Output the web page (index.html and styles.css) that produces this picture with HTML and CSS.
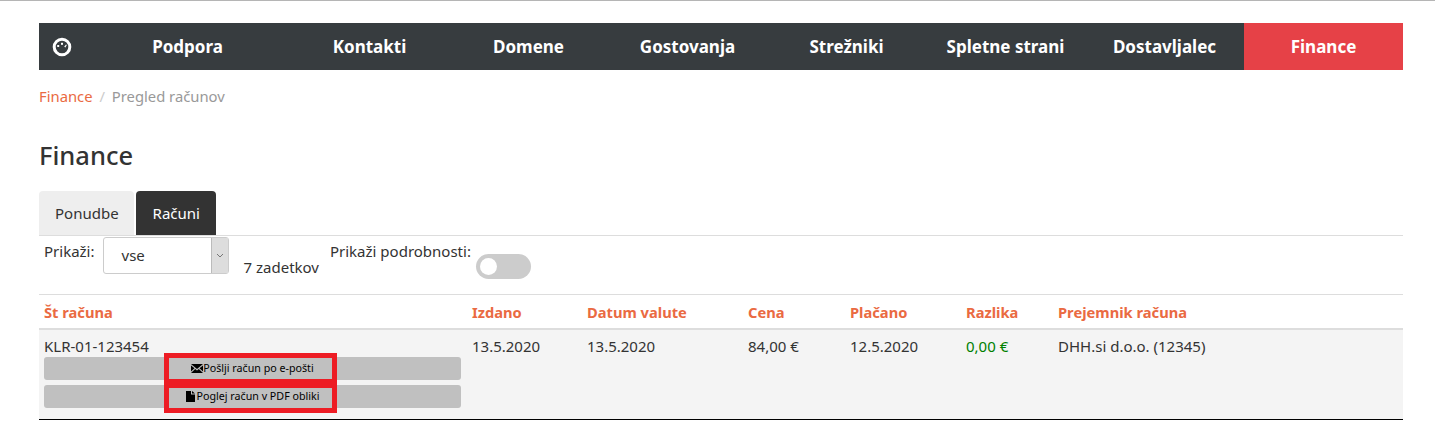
FILE: index.html
```html
<!DOCTYPE html>
<html>
<head>
  <title>Finance</title>
  <meta charset="utf-8">
  <link rel="stylesheet" href="styles.css">
</head>
<body>
<div class="page">
  <nav class="mainnav">
    <a class="navicon" href="#">
      <svg width="20" height="20" viewBox="0 0 20 20">
        <circle cx="10" cy="10" r="7.8" fill="none" stroke="#fff" stroke-width="3"/>
        <rect x="5.200" y="8" width="2" height="2" fill="#fff"/>
        <rect x="9" y="5.800" width="2" height="2" fill="#fff"/>
        <path d="M12.200 9.800l1.800-2.400 0.800 0.600-1.400 2.400z" fill="#fff"/>
      </svg>
    </a>
    <a href="#">Podpora</a>
    <a href="#">Kontakti</a>
    <a href="#">Domene</a>
    <a href="#">Gostovanja</a>
    <a href="#">Strežniki</a>
    <a href="#">Spletne strani</a>
    <a href="#">Dostavljalec</a>
    <a class="active" href="#">Finance</a>
  </nav>

  <div class="crumbs">
    <a href="#">Finance</a>
    <span class="sep">/</span>
    <span class="current">Pregled računov</span>
  </div>

  <h2 class="title">Finance</h2>

  <ul class="tabs">
    <li>Ponudbe</li>
    <li class="on">Računi</li>
  </ul>

  <div class="filters">
    <span class="lbl">Prikaži:</span>
    <div class="select">
      <span class="select-val">vse</span>
      <span class="select-btn">
        <svg width="8" height="5" viewBox="0 0 8 5"><path d="M1 1l3 3 3-3" fill="none" stroke="#777" stroke-width="1"/></svg>
      </span>
    </div>
    <span class="count">7 zadetkov</span>
    <span class="lbl details">Prikaži podrobnosti:</span>
    <span class="toggle"><i></i></span>
  </div>

  <table class="invoices">
    <thead>
      <tr>
        <th class="c-no">Št računa</th>
        <th class="c-date">Izdano</th>
        <th class="c-due">Datum valute</th>
        <th class="c-price">Cena</th>
        <th class="c-paid">Plačano</th>
        <th class="c-diff">Razlika</th>
        <th>Prejemnik računa</th>
      </tr>
    </thead>
    <tbody>
      <tr>
        <td class="first-cell">
          KLR-01-123454
          <a class="btn first" href="#">
            <svg width="12" height="9" viewBox="0 0 12 9"><path d="M0 0h12L6 5zM0 1.500v6l3.500-3.200zM12 1.500v6L8.500 4.300zM0 9h12L7.800 5 6 6.500 4.200 5z"/></svg>Pošlji račun po e-pošti
          </a>
          <a class="btn" href="#">
            <svg class="doc" width="9" height="11" viewBox="0 0 9 11"><path d="M0 0h5v3.500h4V11H0zM6 0l3 2.600H6z"/></svg>Poglej račun v PDF obliki
          </a>
        </td>
        <td>13.5.2020</td>
        <td>13.5.2020</td>
        <td>84,00 €</td>
        <td>12.5.2020</td>
        <td class="zero">0,00 €</td>
        <td>DHH.si d.o.o. (12345)</td>
      </tr>
    </tbody>
  </table>
</div>

<!-- red marks on top of the buttons -->
<div class="mark mark1"></div>
<div class="mark mark2"></div>
</body>
</html>
```

FILE: styles.css
```css
html, body {
  margin: 0;
  padding: 0;
}
body {
  height: 424px;
  overflow: hidden;
  position: relative;
  border-top: 1px solid #b5b5b5;
  box-sizing: border-box;
  background: #fff;
  color: #333;
  font-family: "Noto Sans", "Open Sans", sans-serif;
  font-size: 15px;
}
a {
  text-decoration: none;
  color: inherit;
}
.page {
  margin: 0 32px 0 39px;
  padding-top: 22px;
}
.mainnav {
  display: grid;
  grid-template-columns: 46px 205px repeat(7, 159px);
  height: 47px;
  background: #373c3f;
  color: #fff;
  font-size: 17px;
  font-weight: 700;
}
.mainnav a {
  display: flex;
  align-items: center;
  justify-content: center;
}
.mainnav .active {
  background: #e64147;
}
.crumbs {
  margin-top: 17px;
  height: 18px;
  line-height: 18px;
  color: #999;
  font-size: 14.800px;
}
.crumbs a {
  color: #ea6a42;
}
.crumbs .sep {
  color: #ccc;
  margin: 0 3px;
}
.title {
  margin: 32px 0 0;
  height: 36px;
  line-height: 36px;
  font-size: 25.500px;
  font-weight: 500;
  color: #333;
}
.tabs {
  display: flex;
  gap: 2px;
  list-style: none;
  margin: 18px 0 0;
  padding: 0;
  height: 44px;
  border-bottom: 1px solid #ddd;
}
.tabs li {
  padding: 0 15px 0 16px;
  line-height: 44px;
  border-radius: 4px 4px 0 0;
  background: #eee;
  color: #333;
}
.tabs li.on {
  padding: 0 16px 0 17px;
  background: #333;
  color: #fff;
}
.filters {
  display: flex;
  align-items: flex-start;
  height: 58px;
  padding-left: 5px;
  border-bottom: 1px solid #ddd;
}
.filters .lbl {
  margin-top: 5px;
}
.select {
  display: flex;
  box-sizing: border-box;
  width: 126px;
  height: 37px;
  margin: 1px 0 0 8px;
  border: 1px solid #ccc;
  border-radius: 3px;
}
.select-val {
  flex: 1;
  padding-left: 18px;
  line-height: 35px;
}
.select-btn {
  display: flex;
  align-items: center;
  justify-content: center;
  width: 16px;
  background: #ddd;
  border-left: 1px solid #bbb;
}
.count {
  margin: 21px 0 0 15px;
}
.details {
  margin-left: 11px;
}
.toggle {
  position: relative;
  display: block;
  width: 55px;
  height: 25px;
  margin: 18px 0 0 5px;
  border-radius: 13px;
  background: #ccc;
}
.toggle i {
  position: absolute;
  top: 4px;
  left: 4px;
  width: 17px;
  height: 17px;
  border-radius: 50%;
  background: #fff;
}
.invoices {
  width: 100%;
  table-layout: fixed;
  border-collapse: collapse;
}
.invoices th {
  height: 33px;
  padding: 0 5px;
  text-align: left;
  color: #ea6a42;
  font-size: 14.700px;
  font-weight: 700;
  border-bottom: 2px solid #ddd;
}
.invoices td {
  height: 90px;
  padding: 6px 5px 0;
  box-sizing: border-box;
  vertical-align: top;
  background: #f4f4f4;
  border-bottom: 1px solid #000;
  line-height: 21px;
}
.invoices .first-cell {
  padding-right: 6px;
}
.c-no { width: 418px; }
.c-date { width: 105px; }
.c-due { width: 151px; }
.c-price { width: 92px; }
.c-paid { width: 106px; }
.c-diff { width: 82px; }
.zero {
  color: #008000;
}
.btn {
  display: flex;
  align-items: center;
  justify-content: center;
  height: 23px;
  margin-top: 5px;
  border-radius: 3px;
  background: #c0c0c0;
  color: #000;
  font-size: 10.700px;
}
.btn.first {
  margin-top: 0;
}
.btn svg {
  fill: #000;
}
.btn .doc {
  margin-right: 2px;
}
.mark {
  position: absolute;
  left: 164px;
  width: 173px;
  box-sizing: border-box;
  border: 5px solid #ed1c24;
}
.mark1 {
  top: 352px;
  height: 31px;
}
.mark2 {
  top: 382px;
  height: 30px;
}
```
